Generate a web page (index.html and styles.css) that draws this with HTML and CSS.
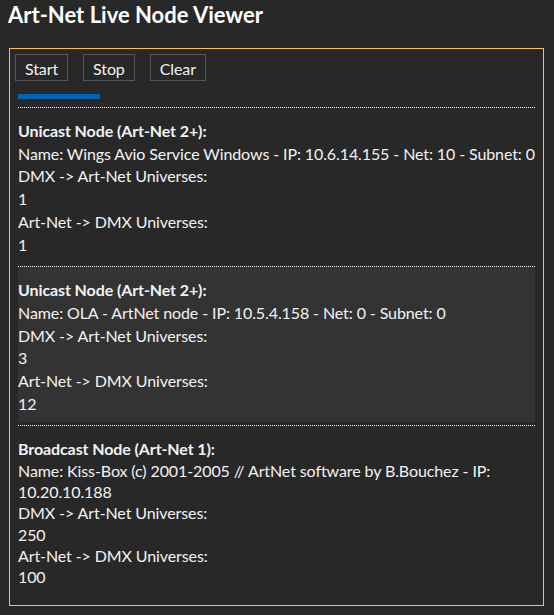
FILE: index.html
```html
<!DOCTYPE html>
<html>
<head>
<meta charset="utf-8">
<title>Art-Net Live Node Viewer</title>
<link rel="stylesheet" href="styles.css">
</head>
<body>
<h1 class="title">Art-Net Live Node Viewer</h1>
<div class="panel">
  <div class="toolbar">
    <button class="btn">Start</button>
    <button class="btn">Stop</button>
    <button class="btn">Clear</button>
  </div>
  <div class="progress"></div>
  <div class="node">
    <div class="node-title">Unicast Node (Art-Net 2+):</div>
    <div class="line">Name: Wings Avio Service Windows - IP: 10.6.14.155 - Net: 10 - Subnet: 0</div>
    <div class="line">DMX -&gt; Art-Net Universes:</div>
    <div class="line">1</div>
    <div class="line">Art-Net -&gt; DMX Universes:</div>
    <div class="line">1</div>
  </div>
  <div class="node node-active">
    <div class="node-title">Unicast Node (Art-Net 2+):</div>
    <div class="line">Name: OLA - ArtNet node - IP: 10.5.4.158 - Net: 0 - Subnet: 0</div>
    <div class="line">DMX -&gt; Art-Net Universes:</div>
    <div class="line">3</div>
    <div class="line">Art-Net -&gt; DMX Universes:</div>
    <div class="line">12</div>
  </div>
  <div class="node node-last">
    <div class="node-title">Broadcast Node (Art-Net 1):</div>
    <div class="line">Name: Kiss-Box (c) 2001-2005 // ArtNet software by B.Bouchez - IP: 10.20.10.188</div>
    <div class="line">DMX -&gt; Art-Net Universes:</div>
    <div class="line">250</div>
    <div class="line">Art-Net -&gt; DMX Universes:</div>
    <div class="line">100</div>
  </div>
</div>
</body>
</html>
```

FILE: styles.css
```css
html, body {
  background: #282828;
}
body {
  margin: 0;
  padding: 0 8px 8px 8px;
  color: #f2f2f2;
  font-family: Lato, "Noto Sans", sans-serif;
  font-size: 16px;
  letter-spacing: -0.1px;
}
.title {
  margin: 1px 0 0 0;
  font-size: 22px;
  line-height: 28px;
  font-weight: bold;
  color: #ffffff;
  letter-spacing: 0;
}
.panel {
  margin: 19px 0 0 1px;
  width: 535px;
  box-sizing: border-box;
  border: 1px solid #f2c54b;
  padding: 5px 5px 7px 5px;
}
.toolbar {
  display: flex;
  gap: 15px;
}
.btn {
  font-family: inherit;
  font-size: 16px;
  line-height: 21px;
  letter-spacing: inherit;
  color: #f2f2f2;
  background: #282828;
  border: 1px solid #555555;
  padding: 3px 9px 1px;
  margin: 0;
}
.progress {
  margin: 13px 3px 8px 3px;
  width: 82px;
  height: 5px;
  background: #0063b5;
}
.node {
  margin: 0 3px 3px 3px;
  border-top: 1px dotted #ffffff;
  padding: 12px 0 7px 0;
  line-height: 22.7px;
}
.node-active {
  background: #333333;
}
.node-last {
  line-height: 21.3px;
}
.node-title {
  font-weight: bold;
}
```
